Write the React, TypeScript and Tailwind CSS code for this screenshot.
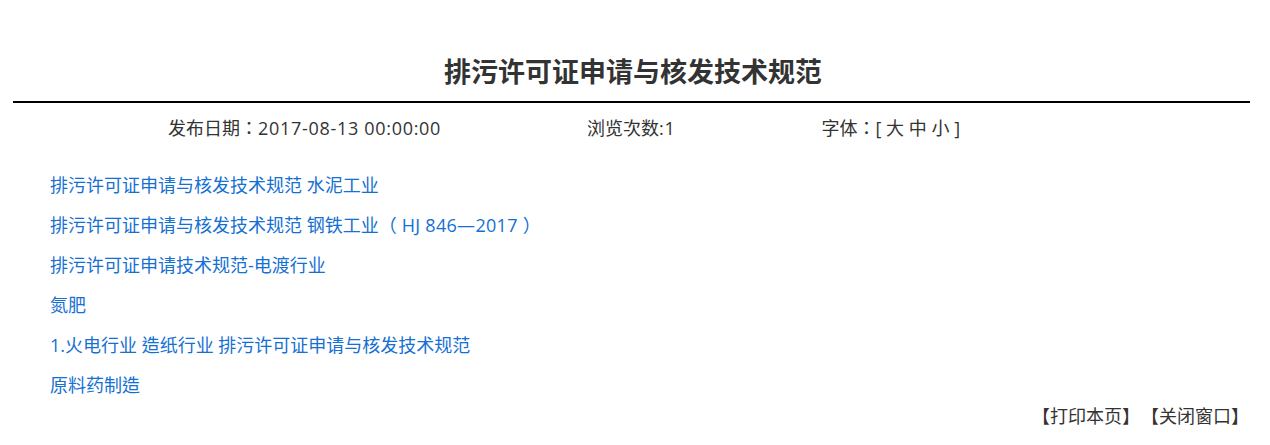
import React from 'react';

// Latin runs in the original font are a little wider than Open Sans
const Lat: React.FC<{ children: React.ReactNode }> = ({ children }) => (
  <span className="tracking-[0.7px]">{children}</span>
);

const links: React.ReactNode[] = [
  '排污许可证申请与核发技术规范 水泥工业',
  <>
    排污许可证申请与核发技术规范 钢铁工业（<span className="tracking-[0.3px]"> HJ 846—2017 </span>）
  </>,
  '排污许可证申请技术规范-电渡行业',
  '氮肥',
  '1.火电行业 造纸行业 排污许可证申请与核发技术规范',
  '原料药制造',
];

const App: React.FC = () => {
  return (
    <div
      className="w-[1270px] h-[445px] bg-white overflow-hidden text-[#333]"
      style={{ fontFamily: '"Open Sans", "Noto Sans CJK TC", sans-serif' }}
    >
      {/* Title */}
      <h1 className="mt-[52px] text-center text-[27px] leading-[40px] font-bold text-[#333] pr-[4px]">
        排污许可证申请与核发技术规范
      </h1>
      <div className="ml-[13px] mr-[20px] mt-[9px] h-[2px] bg-black" />

      {/* Meta */}
      <div className="mt-[13px] flex pl-[168px] gap-[146px] text-[18px] leading-[24px]">
        <span>
          发布日期：<Lat>2017-08-13 00:00:00</Lat>
        </span>
        <span>
          浏览次数<Lat>:1</Lat>
        </span>
        <span>
          字体：[ <a className="cursor-pointer">大</a> <a className="cursor-pointer">中</a>{' '}
          <a className="cursor-pointer">小</a> ]
        </span>
      </div>

      {/* Attachments */}
      <ul className="mt-[25px] pl-[50px]">
        {links.map((item, i) => (
          <li key={i} className="text-[18px] leading-[40px]">
            <a className="text-[#1470d2] cursor-pointer">{item}</a>
          </li>
        ))}
      </ul>

      {/* Footer actions */}
      <div className="mt-[-1px] pr-[21px] text-right text-[18px] leading-[24px]">
        <a className="cursor-pointer">【打印本页】</a>
        <a className="cursor-pointer ml-[10px]">【关闭窗口】</a>
      </div>
    </div>
  );
};

export default App;
